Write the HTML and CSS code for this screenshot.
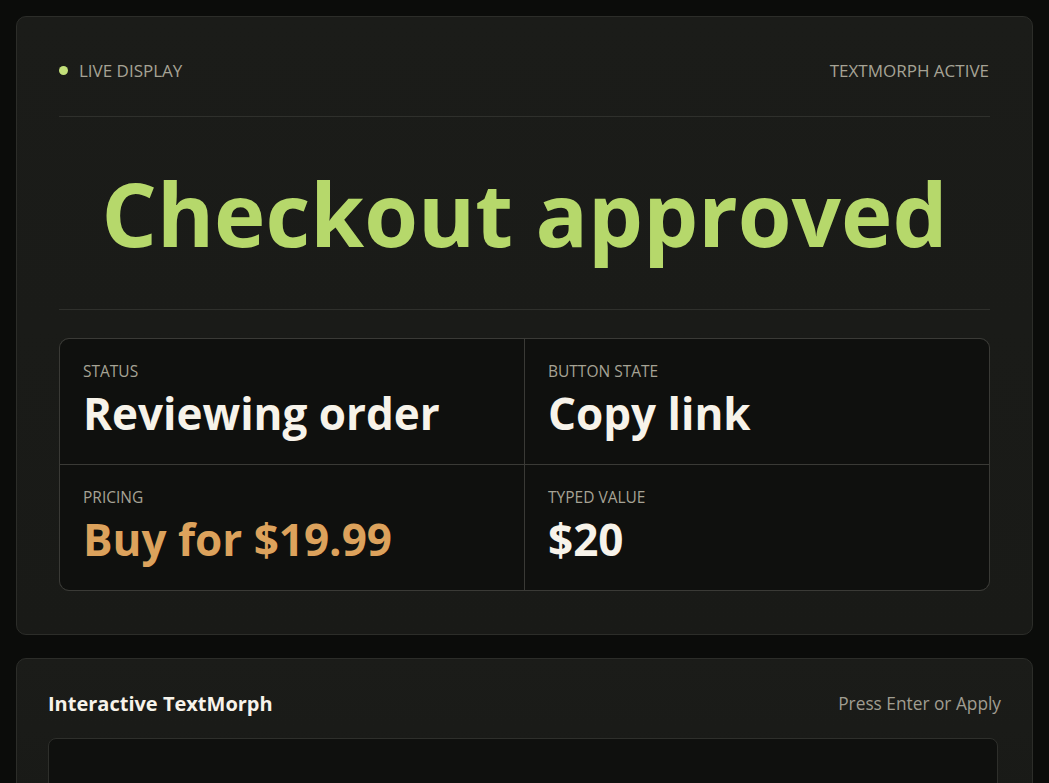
FILE: index.html
```html
<!DOCTYPE html>
<html lang="en">
<head>
<meta charset="utf-8">
<title>TextMorph</title>
<link rel="stylesheet" href="styles.css">
</head>
<body>
<main class="page">
  <section class="card display">
    <header class="display-head">
      <span class="live"><span class="dot"></span>LIVE DISPLAY</span>
      <span class="mode">TEXTMORPH ACTIVE</span>
    </header>
    <div class="stage">
      <h1 class="headline">Checkout approved</h1>
    </div>
    <div class="grid">
      <div class="cell">
        <div class="label">STATUS</div>
        <div class="value">Reviewing order</div>
      </div>
      <div class="cell">
        <div class="label">BUTTON STATE</div>
        <div class="value">Copy link</div>
      </div>
      <div class="cell">
        <div class="label">PRICING</div>
        <div class="value price">Buy for $19.99</div>
      </div>
      <div class="cell">
        <div class="label">TYPED VALUE</div>
        <div class="value">$20</div>
      </div>
    </div>
  </section>

  <section class="card control">
    <header class="control-head">
      <h2 class="control-title">Interactive TextMorph</h2>
      <span class="hint">Press Enter or Apply</span>
    </header>
    <div class="input-box"></div>
  </section>
</main>
</body>
</html>
```

FILE: styles.css
```css
* { box-sizing: border-box; }

html, body {
  margin: 0;
  background: #0b0c0a;
  font-family: "Open Sans", "Noto Sans", sans-serif;
  color: #f6f2e8;
}

body {
  height: 783px;
  overflow: hidden;
}

.page {
  padding: 16px;
  display: flex;
  flex-direction: column;
  gap: 23px;
}

.card {
  background: linear-gradient(180deg, #1b1c19 0%, #191a17 100%);
  border: 1px solid #2c2d29;
  border-radius: 10px;
}

.display {
  padding: 42px 42px 43px;
}

.display-head {
  display: flex;
  justify-content: space-between;
  align-items: center;
  height: 22px;
  font-size: 17px;
  color: #a6a395;
  padding-right: 1px;
}

.live {
  display: flex;
  align-items: center;
  gap: 11px;
}

.dot {
  width: 9px;
  height: 9px;
  border-radius: 50%;
  background: #c3e07a;
}

.stage {
  border-top: 1px solid #2f302c;
  border-bottom: 1px solid #2f302c;
  margin-top: 35px;
  height: 194px;
  display: flex;
  align-items: center;
  justify-content: center;
}

.headline {
  margin: 0;
  font-size: 87px;
  font-weight: 700;
  color: #b6d86b;
  line-height: 1;
}

.grid {
  margin-top: 28px;
  display: grid;
  grid-template-columns: 1fr 1fr;
  background: #3a3a36;
  gap: 1px;
  border: 1px solid #3a3a36;
  border-radius: 10px;
  overflow: hidden;
}

.cell {
  background: #0f100e;
  height: 125px;
  padding: 23px 23px 0;
}

.label {
  font-size: 15.5px;
  color: #a6a395;
  line-height: 18px;
}

.value {
  margin-top: 9px;
  font-size: 44px;
  font-weight: 700;
  line-height: 48px;
  color: #f7f3ea;
}

.value.price {
  color: #dca25c;
}

.control {
  padding: 31px 31px 0;
  height: 140px;
}

.control-head {
  display: flex;
  justify-content: space-between;
  align-items: center;
  height: 26px;
}

.control-title {
  margin: 0;
  font-size: 20px;
  font-weight: 700;
  color: #f7f3ea;
}

.hint {
  font-size: 17.3px;
  color: #a09d91;
}

.input-box {
  margin-top: 22px;
  height: 80px;
  background: #0f100e;
  border: 1px solid #2e2f2b;
  border-radius: 8px;
  margin-right: 3px;
}
```
